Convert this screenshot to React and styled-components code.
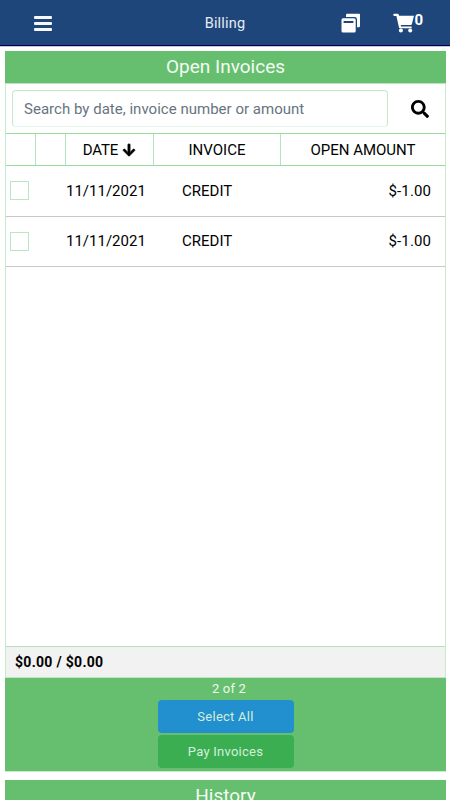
import React from "react";
import styled, { createGlobalStyle } from "styled-components";
import { FaArrowDown, FaSearch } from "react-icons/fa";

const invoices = [
  { id: 1, date: "11/11/2021", invoice: "CREDIT", amount: "$-1.00" },
  { id: 2, date: "11/11/2021", invoice: "CREDIT", amount: "$-1.00" }
];

export const App = () => {
  return (
    <Page>
      <GlobalStyle />
      <TopBar>
        <IconButton aria-label="Menu">
          <MenuIcon>
            <MenuLine />
            <MenuLine />
            <MenuLine />
          </MenuIcon>
        </IconButton>
        <PageTitle>Billing</PageTitle>
        <TopActions>
          <IconButton aria-label="Accounts">
            <CardsIcon />
          </IconButton>
          <IconButton aria-label="Cart">
            <CartIcon />
            <CartCount>0</CartCount>
          </IconButton>
        </TopActions>
      </TopBar>
      <Content>
        <Panel>
          <PanelTitle>Open Invoices</PanelTitle>
          <SearchRow>
            <SearchInput placeholder="Search by date, invoice number or amount" />
            <SearchButton aria-label="Search">
              <FaSearch size={18} />
            </SearchButton>
          </SearchRow>
          <HeaderRow>
            <HeaderCell />
            <HeaderCell />
            <HeaderCell>
              <Label $spacing="-0.1px">DATE</Label>
              <SortIcon size={14} />
            </HeaderCell>
            <HeaderCell>
              <Label>INVOICE</Label>
            </HeaderCell>
            <HeaderCell>
              <Label>OPEN AMOUNT</Label>
            </HeaderCell>
          </HeaderRow>
          <Rows>
            {invoices.map(({ id, date, invoice, amount }) => (
              <Row key={id}>
                <Checkbox type="checkbox" aria-label={invoice} />
                <DateCell>{date}</DateCell>
                <InvoiceCell>{invoice}</InvoiceCell>
                <AmountCell>{amount}</AmountCell>
              </Row>
            ))}
          </Rows>
          <Totals>$0.00 / $0.00</Totals>
          <PanelFooter>
            <Count>2 of 2</Count>
            <Button $color="#228fce">Select All</Button>
            <Button $color="#3bae51">Pay Invoices</Button>
          </PanelFooter>
        </Panel>
        <Panel>
          <PanelTitle>History</PanelTitle>
        </Panel>
      </Content>
    </Page>
  );
};

const CardsIcon = () => (
  <svg width="20" height="20" viewBox="0 0 20 20" fill="#fff">
    <path d="M6 0.8H18.2Q19 0.8 19 1.6V13Q19 14.2 17.8 14.2H16V6.4Q16 4 13.6 4H5V1.8Q5 0.8 6 0.8Z" />
    <path
      fillRule="evenodd"
      d="M2 5.2H13Q14.7 5.2 14.7 6.9V18Q14.7 19.5 13.2 19.5H2Q0.5 19.5 0.5 18V6.7Q0.5 5.2 2 5.2ZM2.6 8V9.9H12.4V8Z"
    />
  </svg>
);

const CartIcon = () => (
  <svg width="21" height="20" viewBox="0 0 21 20" fill="#fff">
    <path d="M1.2 0.7H4.6Q5.5 0.7 5.8 1.7L6.1 2.8H21L18.9 11.1Q18.7 12 17.8 12H7.7L8.1 13.5H18.6V15.2H7Q6.2 15.2 6 14.4L3.4 3H1.2Q0.2 3 0.2 1.85Q0.2 0.7 1.2 0.7Z" />
    <circle cx="7.9" cy="17.5" r="2" />
    <circle cx="17.2" cy="17.5" r="2" />
  </svg>
);

const GlobalStyle = createGlobalStyle`
  * {
    box-sizing: border-box;
  }
  body {
    margin: 0;
    overflow: hidden;
    background: #fff;
    color: #000;
    font-family: Roboto, "Liberation Sans", sans-serif;
  }
  button,
  input {
    font-family: inherit;
  }
`;

const Page = styled.div`
  height: 800px;
  overflow: hidden;
`;

const TopBar = styled.header`
  display: grid;
  grid-template-columns: 1fr auto 1fr;
  align-items: center;
  height: 46px;
  padding: 0 27px 0 34px;
  background: #1f467b;
  border-bottom: 1px solid #000052;
  box-shadow: 0 1px 0 #c6c6dd;
  color: #fff;
`;

const IconButton = styled.button`
  display: flex;
  align-items: center;
  padding: 0;
  border: 0;
  background: none;
  color: #fff;
`;

const MenuIcon = styled.span`
  display: grid;
  gap: 3px;
  padding-top: 2px;
`;

const MenuLine = styled.span`
  width: 18px;
  height: 3px;
  border-radius: 1px;
  background: #f6f8fb;
`;

const PageTitle = styled.h1`
  margin: 0;
  padding: 1px 7px 0 0;
  font-size: 14.5px;
  font-weight: 400;
  letter-spacing: 0.2px;
  color: #e6ecf5;
`;

const TopActions = styled.div`
  display: flex;
  justify-content: flex-end;
  align-items: center;
  gap: 32px;
  padding-top: 1px;
`;

const CartCount = styled.span`
  padding-bottom: 6px;
  font-size: 15px;
  line-height: 18px;
  font-weight: 700;
`;

const Content = styled.main`
  display: grid;
  gap: 8px;
  padding: 5px 4px 0 5px;
`;

const Panel = styled.section`
  border: solid #c9ebcd;
  border-width: 0 1px 1px;
`;

const PanelTitle = styled.h2`
  height: 33px;
  margin: 0 -1px;
  border-bottom: 1px solid #bde4c1;
  background: #66bf6e;
  color: #f4fbf4;
  font-size: 19px;
  font-weight: 400;
  line-height: 32px;
  text-align: center;
`;

const SearchRow = styled.div`
  display: grid;
  grid-template-columns: 376px 1fr;
  height: 49px;
  padding: 6px 0 6px 6px;
`;

const SearchInput = styled.input`
  padding: 0 11px;
  border: 1px solid #c3e8c7;
  border-bottom-color: #e3f3ee;
  border-radius: 4px;
  outline: 0;
  font-size: 15px;
  letter-spacing: 0.02px;
  &::placeholder {
    color: #68747f;
    opacity: 1;
  }
`;

const SearchButton = styled(IconButton)`
  justify-content: center;
  padding-left: 7px;
  color: #000;
`;

const HeaderRow = styled.div`
  display: grid;
  grid-template-columns: 30px 30px 88px 127px 1fr;
  height: 33px;
  border-top: 1px solid #98dca0;
  border-bottom: 1px solid #98dca0;
`;

const HeaderCell = styled.div`
  display: flex;
  justify-content: center;
  align-items: center;
  gap: 4px;
  border-right: 1px solid #b4e5ba;
  font-size: 15px;
  &:last-child {
    border-right: 0;
  }
`;

const SortIcon = styled(FaArrowDown)`
  overflow: visible;
  stroke: currentColor;
  stroke-width: 24px;
`;

const Label = styled.span`
  letter-spacing: ${({ $spacing }) => $spacing || "0"};
  white-space: nowrap;
`;

const Rows = styled.div`
  height: 480px;
`;

const Row = styled.div`
  display: grid;
  grid-template-columns: 60px 116px 1fr auto;
  align-items: center;
  height: 50.5px;
  padding-right: 14px;
  border-bottom: 1px solid #c8c8c8;
  font-size: 15px;
`;

const Checkbox = styled.input`
  appearance: none;
  width: 19px;
  height: 19px;
  margin: 0 0 0 4px;
  border: 1px solid #bce6c1;
  background: #fff;
`;

const DateCell = styled.span``;

const InvoiceCell = styled.span``;

const AmountCell = styled.span`
  letter-spacing: 0.1px;
`;

const Totals = styled.div`
  height: 32px;
  padding-left: 9px;
  border-top: 1px solid #b5dfba;
  border-bottom: 1px solid #bfe5c3;
  background: #f2f2f2;
  font-size: 14px;
  font-weight: 700;
  line-height: 31px;
  letter-spacing: 0.3px;
`;

const PanelFooter = styled.div`
  display: flex;
  flex-direction: column;
  align-items: center;
  height: 93px;
  margin: 0 -1px;
  background: #66bf6e;
`;

const Count = styled.span`
  height: 22px;
  padding-left: 7px;
  color: #eef9ef;
  font-size: 13px;
  line-height: 22px;
  letter-spacing: 0.2px;
`;

const Button = styled.button`
  width: 136px;
  height: 33px;
  margin-bottom: 2px;
  padding: 0;
  border: 0;
  border-radius: 4px;
  background: ${({ $color }) => $color};
  color: #d3eedb;
  font-size: 13px;
  letter-spacing: 0.25px;
`;

export default App;
